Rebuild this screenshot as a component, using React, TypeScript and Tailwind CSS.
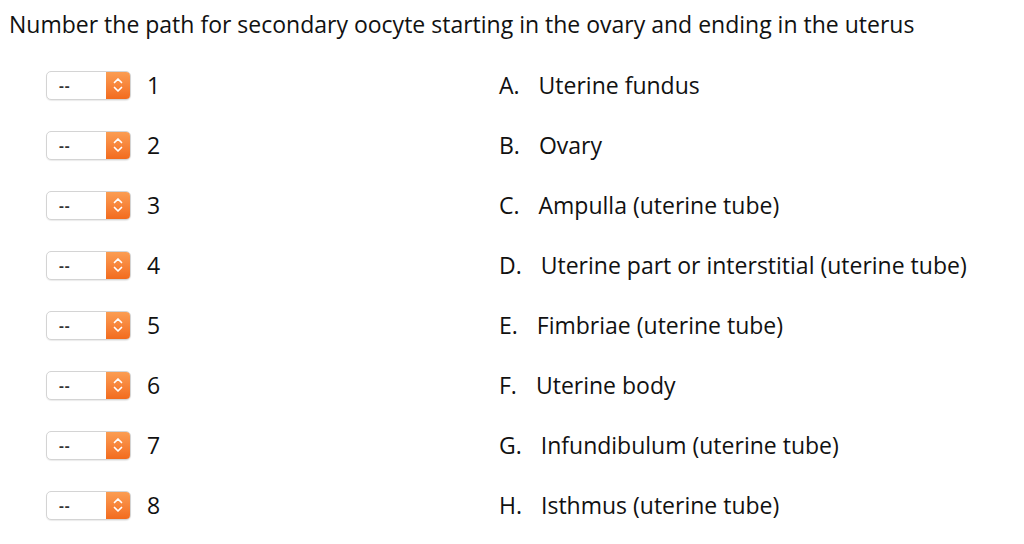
const rows = [
  { n: "1", letter: "A.", text: "Uterine fundus" },
  { n: "2", letter: "B.", text: "Ovary" },
  { n: "3", letter: "C.", text: "Ampulla (uterine tube)" },
  { n: "4", letter: "D.", text: "Uterine part or interstitial (uterine tube)" },
  { n: "5", letter: "E.", text: "Fimbriae (uterine tube)" },
  { n: "6", letter: "F.", text: "Uterine body" },
  { n: "7", letter: "G.", text: "Infundibulum (uterine tube)" },
  { n: "8", letter: "H.", text: "Isthmus (uterine tube)" },
];

function Stepper() {
  return (
    <div className="flex h-[29px] w-[85px] overflow-hidden rounded-[5px] border border-[#d4d4d4] bg-white shadow-[0_1px_1px_rgba(0,0,0,0.08)]">
      <div className="flex flex-1 items-center pl-[12px] text-[15px] font-bold tracking-[1px] text-[#333]">--</div>
      <div className="flex w-[24px] items-center justify-center bg-gradient-to-b from-[#fb9d52] to-[#f26b1d]">
        <svg width="12" height="20" viewBox="0 0 12 20" fill="none" stroke="white" strokeWidth="1.7" strokeLinecap="round" strokeLinejoin="round">
          <path d="M2.5 7.5 L6 4 L9.5 7.5" />
          <path d="M2.5 12.5 L6 16 L9.5 12.5" />
        </svg>
      </div>
    </div>
  );
}

export default function App() {
  return (
    <div className="h-[544px] w-[1024px] bg-white font-['Open_Sans',sans-serif] text-[23px] text-[#111]">
      <div className="pl-[9px] pt-[8px] leading-[32px]">
        Number the path for secondary oocyte starting in the ovary and ending in the uterus
      </div>
      <div className="mt-[15px] flex flex-col">
        {rows.map((r) => (
          <div key={r.n} className="flex h-[60px] items-center">
            <div className="ml-[46px]">
              <Stepper />
            </div>
            <span className="ml-[16px] w-[20px]">{r.n}</span>
            <span className="ml-[332px]">{r.letter}</span>
            <span className="ml-[19px]">{r.text}</span>
          </div>
        ))}
      </div>
    </div>
  );
}
